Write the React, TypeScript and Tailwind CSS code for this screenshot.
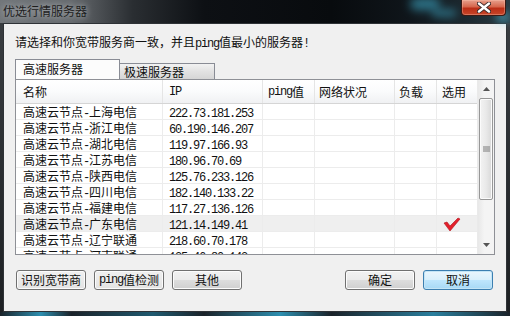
import React from "react";

const mono = "font-['Liberation_Mono',monospace] tracking-[-1.2px]";

function Mixed({ text }: { text: string }) {
  const parts = text.match(/[\x20-\x7e]+|[^\x20-\x7e]+/g) || [];
  return (
    <>
      {parts.map((p, i) =>
        /^[\x20-\x7e]+$/.test(p) ? (
          <span key={i} className={mono}>
            {p}
          </span>
        ) : (
          <span key={i}>{p}</span>
        )
      )}
    </>
  );
}

const rows: [string, string][] = [
  ["高速云节点-上海电信", "222.73.181.253"],
  ["高速云节点-浙江电信", "60.190.146.207"],
  ["高速云节点-湖北电信", "119.97.166.93"],
  ["高速云节点-江苏电信", "180.96.70.69"],
  ["高速云节点-陕西电信", "125.76.233.126"],
  ["高速云节点-四川电信", "182.140.133.22"],
  ["高速云节点-福建电信", "117.27.136.126"],
  ["高速云节点-广东电信", "121.14.149.41"],
  ["高速云节点-辽宁联通", "218.60.70.178"],
  ["高速云节点-河南联通", "125.46.80.143"],
];

const cols = "grid grid-cols-[147px_100px_52px_80px_42px_40px]";

function Check() {
  return (
    <svg width="18" height="15" viewBox="0 0 18 15">
      <path
        d="M1 6 L4 5 L7 9 L15 1 L17 2 L7 14 Z"
        fill="#e3202c"
        stroke="#b0101a"
        strokeWidth="0.6"
        strokeLinejoin="round"
      />
    </svg>
  );
}

function Btn({ label, kind }: { label: string; kind: "flat" | "aero" | "focus" }) {
  const base =
    "h-[20px] w-[70px] rounded-[3px] border flex items-center justify-center text-[12px] leading-[16px] text-[#111] whitespace-nowrap";
  const k =
    kind === "flat"
      ? "border-[#707070] bg-[linear-gradient(#f0f0f0,#e3e3e3)] shadow-[inset_0_0_0_1px_#fbfbfb]"
      : kind === "aero"
      ? "border-[#707070] bg-[linear-gradient(#f2f2f2_0%,#ebebeb_48%,#dddddd_52%,#cfcfcf_100%)] shadow-[inset_0_0_0_1px_#fcfcfc]"
      : "border-[#3c7fb1] bg-[linear-gradient(#eaf6fd_0%,#d9f0fc_48%,#bee6fd_52%,#a7d9f5_100%)] shadow-[inset_0_0_0_1px_#c4e5f6]";
  return (
    <div className={`${base} ${k}`}>
      <Mixed text={label} />
    </div>
  );
}

export default function App() {
  return (
    <div className="w-[510px] h-[316px] relative overflow-hidden bg-[linear-gradient(#3b3f43,#1c1f22)] font-['Noto_Sans_CJK_SC',sans-serif]">
      {/* title bar */}
      <div className="h-[23px] relative bg-[linear-gradient(90deg,#72767a_0%,#666a6e_14%,#2a2e32_26%,#0d1014_40%,#080b0e_65%,#0f151a_80%,#1d2a31_92%,#2a3a42_100%)]">
        <div className="absolute left-[410px] top-[-2px] w-[30px] h-[12px] rounded-full bg-[#3fb0cf] opacity-60 blur-[5px]" />
        <div className="absolute left-[432px] top-[9px] w-[24px] h-[8px] rounded-full bg-[#3fb0cf] opacity-50 blur-[4px]" />
        <div className="absolute left-[496px] top-[12px] w-[14px] h-[10px] rounded-full bg-[#4fc0dd] opacity-60 blur-[4px]" />
        <div className="pl-[3px] pt-[2px] text-[12px] leading-[17px] text-[#1e1e1e] [text-shadow:0_0_6px_rgba(210,215,220,0.9)]">
          优选行情服务器
        </div>
        <div className="absolute top-0 right-[4px] w-[45px] h-[16px] rounded-b-[4px] border border-t-0 border-[#3c1a14] bg-[linear-gradient(#e7a08c_0%,#d6664c_45%,#bb2e16_55%,#c8462a_100%)] shadow-[inset_0_0_0_1px_rgba(255,200,180,0.35)] flex items-center justify-center">
          <svg width="14" height="11" viewBox="0 0 14 11">
            <path d="M2 1.5 L12 9.5 M12 1.5 L2 9.5" stroke="#3a2a2a" strokeWidth="4.2" strokeLinecap="round" />
            <path d="M2 1.5 L12 9.5 M12 1.5 L2 9.5" stroke="#ffffff" strokeWidth="2.4" strokeLinecap="round" />
          </svg>
        </div>
      </div>

      {/* client */}
      <div className="px-[3px]">
        <div className="w-[504px] h-[289px] border border-[#2e3236] bg-[#f0f0f0] flex flex-col text-[#111]">
          <div className="pl-[11px] pt-[10px] text-[12px] leading-[16px]">
            <Mixed text="请选择和你宽带服务商一致，并且ping值最小的服务器!" />
          </div>

          {/* tabs */}
          <div className="mt-[8px] pl-[11px] flex items-end h-[19px] relative z-10">
            <div className="h-[20px] w-[105px] border border-b-0 border-[#898c95] bg-[#fcfcfc] pl-[7px] pt-[1px] text-[12px] leading-[16px]">
              高速服务器
            </div>
            <div className="h-[16px] w-[95px] border border-l-0 border-b-0 border-[#898c95] bg-[linear-gradient(#f2f2f2,#e2e2e2_50%,#d6d6d6)] pl-[4px] text-[12px] leading-[15px]">
              极速服务器
            </div>
          </div>

          {/* list */}
          <div className="ml-[11px] w-[480px] h-[176px] border border-[#8e9096] bg-white flex">
            <div className="flex-1 flex flex-col overflow-hidden">
              <div className={`${cols} h-[24px] border-b border-[#d5d5d5] bg-[linear-gradient(#ffffff,#fafbfc_50%,#f0f1f3)] text-[12px] leading-[16px]`}>
                <div className="border-r border-[#e5e5e5] pl-[7px] flex items-center">名称</div>
                <div className="border-r border-[#e5e5e5] pl-[6px] flex items-center">
                  <span className={mono}>IP</span>
                </div>
                <div className="border-r border-[#e5e5e5] pl-[5px] flex items-center whitespace-nowrap">
                  <Mixed text="ping值" />
                </div>
                <div className="border-r border-[#e5e5e5] pl-[4px] flex items-center">网络状况</div>
                <div className="border-r border-[#e5e5e5] pl-[4px] flex items-center">负载</div>
                <div className="pl-[5px] flex items-center">选用</div>
              </div>
              <div className="flex-1 overflow-hidden">
                {rows.map(([name, ip], i) => (
                  <div
                    key={i}
                    className={`${cols} h-[16px] border-b border-[#ececec] text-[12px] leading-[15px] ${
                      i === 7 ? "bg-[#efefef]" : ""
                    }`}
                  >
                    <div className="border-r border-[#ececec] pl-[7px] whitespace-nowrap">
                      <Mixed text={name} />
                    </div>
                    <div className="border-r border-[#ececec] pl-[6px] whitespace-nowrap">
                      <span className={mono}>{ip}</span>
                    </div>
                    <div className="border-r border-[#ececec]" />
                    <div className="border-r border-[#ececec]" />
                    <div className="border-r border-[#ececec]" />
                    <div className="pl-[6px] pt-[1px]">{i === 7 ? <Check /> : null}</div>
                  </div>
                ))}
              </div>
            </div>

            {/* scrollbar */}
            <div className="w-[17px] flex flex-col bg-[linear-gradient(90deg,#e8e8e8,#f4f4f4_40%,#f4f4f4)] border-l border-[#eaeaea]">
              <div className="h-[18px] flex items-center justify-center">
                <svg width="7" height="4" viewBox="0 0 7 4">
                  <path d="M0 4 L3.5 0 L7 4 Z" fill="#555" />
                </svg>
              </div>
              <div className="mx-[1px] h-[102px] rounded-[2px] border border-[#979797] bg-[linear-gradient(90deg,#f3f3f3,#e9e9e9_50%,#d8d8d8)] shadow-[inset_0_0_0_1px_#fbfbfb] flex items-center justify-center">
                <svg width="7" height="7" viewBox="0 0 7 7">
                  <path d="M0 1 H7 M0 3 H7 M0 5 H7" stroke="#7a7a7a" strokeWidth="1" />
                </svg>
              </div>
              <div className="flex-1" />
              <div className="h-[18px] flex items-center justify-center">
                <svg width="7" height="4" viewBox="0 0 7 4">
                  <path d="M0 0 L7 0 L3.5 4 Z" fill="#555" />
                </svg>
              </div>
            </div>
          </div>

          {/* buttons */}
          <div className="mt-[15px] pl-[12px] pr-[13px] flex items-center">
            <div className="flex gap-[8px]">
              <Btn label="识别宽带商" kind="flat" />
              <Btn label="ping值检测" kind="flat" />
              <Btn label="其他" kind="aero" />
            </div>
            <div className="ml-auto flex gap-[8px]">
              <Btn label="确定" kind="aero" />
              <Btn label="取消" kind="focus" />
            </div>
          </div>
        </div>
      </div>

      {/* bottom frame glow */}
      <div className="h-[4px] bg-[linear-gradient(90deg,#1a2229_0%,#2d8fb0_8%,#1a2229_14%,#1f5a70_30%,#1a2229_40%,#2d8fb0_55%,#1a2229_65%,#2a7f9e_85%,#1a2229_100%)]" />
    </div>
  );
}
